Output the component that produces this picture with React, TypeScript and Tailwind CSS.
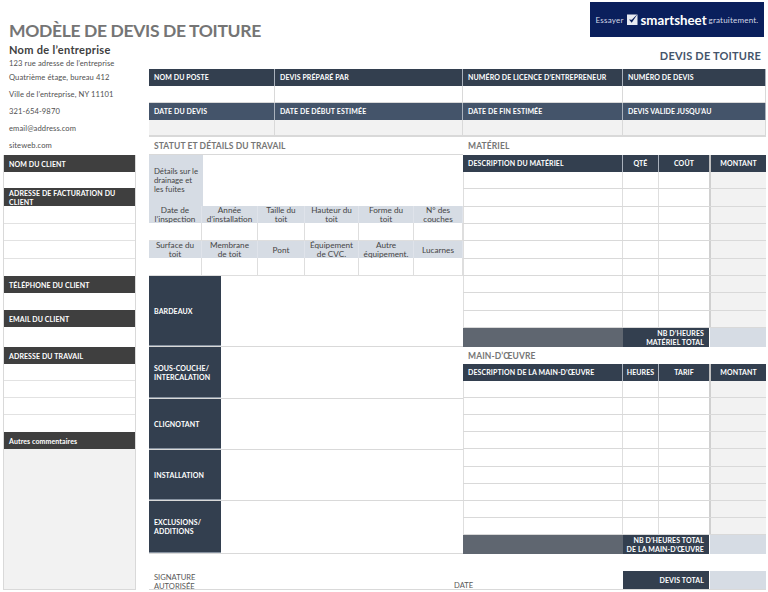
const font = { fontFamily: '"Lato", "Open Sans", sans-serif' };

function Bar({ children, h }: { children: React.ReactNode; h: string }) {
  return (
    <div className={`${h} bg-[#3f3f3f] text-white font-bold text-[7px] leading-[9px] tracking-[0.1px] pl-[5px] pt-[1px] flex items-center`}>
      <span>{children}</span>
    </div>
  );
}

function Blank({ h }: { h: string }) {
  return <div className={`${h} bg-white border-b border-[#e2e2e2]`} />;
}

function Head({ children, light }: { children: React.ReactNode; light?: boolean }) {
  return (
    <div className={`h-[17px] ${light ? "bg-[#44546a]" : "bg-[#333f4f]"} border-r border-[#aab2bd] text-white font-bold text-[7px] tracking-[0.1px] pl-[5px] flex items-center whitespace-nowrap`}>
      {children}
    </div>
  );
}

function Label({ children }: { children: React.ReactNode }) {
  return (
    <div className="h-[17px] bg-[#d6dce4] border-r border-[#dfe3ea] text-[#454545] text-[8.2px] leading-[9px] pt-[1px] text-center flex items-center justify-center whitespace-nowrap">
      <span>{children}</span>
    </div>
  );
}

function WorkRow({ label, h }: { label: React.ReactNode; h: string }) {
  return (
    <div className={`${h} flex border-b border-[#d9d9d9]`}>
      <div className="w-[72px] bg-[#333f4f] text-white font-bold text-[7px] leading-[9px] tracking-[0.1px] pl-[5px] pt-[1px] flex items-center border-b border-[#8792a0]">
        <span>{label}</span>
      </div>
      <div className="flex-1 bg-white" />
    </div>
  );
}

function LineTable({
  first,
  second,
  third,
  rowsH,
  total,
}: {
  first: string;
  second: string;
  third: string;
  rowsH: string;
  total: React.ReactNode;
}) {
  const rows = Array.from({ length: 9 });
  const cols = "grid grid-cols-[160px_36px_50px_57px]";
  return (
    <div>
      <div className={`${cols} h-[17px] bg-[#333f4f] text-white font-bold text-[7px] tracking-[0.1px]`}>
        <div className="pl-[5px] flex items-center border-r border-[#aab2bd] whitespace-nowrap">{first}</div>
        <div className="flex items-center justify-center border-r border-[#aab2bd]">{second}</div>
        <div className="flex items-center justify-center">{third}</div>
        <div className="flex items-center justify-center border-l-2 border-[#bfbfbf]">MONTANT</div>
      </div>
      <div className={`${rowsH} grid grid-rows-9`}>
        {rows.map((_, i) => (
          <div key={i} className={`${cols} border-b border-[#d9d9d9]`}>
            <div className="border-x border-[#dedede]" />
            <div className="border-r border-[#dedede]" />
            <div />
            <div className="bg-[#f2f2f2] border-l-2 border-[#d0d0d0]" />
          </div>
        ))}
      </div>
      <div className={`${cols} h-[19px]`}>
        <div className="bg-[#5f6670]" />
        <div className="col-span-2 bg-[#333f4f] text-white font-bold text-[7px] leading-[9px] tracking-[0.1px] text-right pr-[5px] flex items-center justify-end whitespace-nowrap">
          <span>{total}</span>
        </div>
        <div className="bg-[#d6dce4] border-l border-white" />
      </div>
    </div>
  );
}

function SectionTitle({ children, h }: { children: React.ReactNode; h: string }) {
  return (
    <div className={`${h} pl-[5px] pt-[1px] flex items-center text-[#767676] font-bold text-[8.5px] tracking-[0.1px] whitespace-nowrap`}>
      {children}
    </div>
  );
}

export default function App() {
  return (
    <div className="w-[768px] h-[592px] bg-white overflow-hidden" style={font}>
      <div className="h-[42px] flex justify-between items-start">
        <h1 className="mt-[20px] ml-[9px] text-[17.5px] leading-[22px] font-bold text-[#757575] tracking-[-0.35px] whitespace-nowrap">
          MODÈLE DE DEVIS DE TOITURE
        </h1>
        <div className="mt-[2px] mr-[4px] w-[174px] h-[35px] bg-[#0a1f5c] text-[#d5d9e6] flex items-center justify-center whitespace-nowrap">
          <span className="text-[8px] tracking-[0.2px]">Essayer</span>
          <svg width="13" height="13" viewBox="0 0 13 13" className="mx-[2px]">
            <rect x="1" y="1.5" width="10.5" height="10.5" fill="#e8ebf2" />
            <path d="M3 6.5 L5.7 9.8 L11.8 0.8 L5.8 6.8 Z" fill="#0a1f5c" />
          </svg>
          <span className="text-[13.3px] leading-[14px] font-bold text-white">smartsheet</span>
          <span className="ml-[2px] text-[8px] tracking-[0.2px]">gratuitement.</span>
        </div>
      </div>

      <div className="flex items-start pl-[3px]">
        <div className="w-[133px] mr-[13px]">
          <div className="h-[16px] pl-[6px] pt-[1px] flex items-center text-[11px] font-bold text-[#404040] tracking-[0.3px] whitespace-nowrap">
            Nom de l’entreprise
          </div>
          <div className="pl-[6px] text-[7.6px] text-[#505050] tracking-[0.1px]">
            <div className="h-[11px] flex items-center">123 rue adresse de l’entreprise</div>
            <div className="h-[17px] flex items-center">Quatrième étage, bureau 412</div>
            <div className="h-[17px] flex items-center">Ville de l’entreprise, NY 11101</div>
            <div className="h-[17px] flex items-center">321-654-9870</div>
            <div className="h-[17px] flex items-center">email@address.com</div>
            <div className="h-[18px] flex items-center">siteweb.com</div>
          </div>
          <div className="border-x border-[#d9d9d9]">
            <Bar h="h-[17px]">NOM DU CLIENT</Bar>
            <div className="h-[16px] bg-white" />
            <Bar h="h-[18px]">
              ADRESSE DE FACTURATION DU
              <br />
              CLIENT
            </Bar>
            <Blank h="h-[18px]" />
            <Blank h="h-[17px]" />
            <Blank h="h-[18px]" />
            <div className="h-[17px] bg-white" />
            <Bar h="h-[17px]">TÉLÉPHONE DU CLIENT</Bar>
            <div className="h-[17px] bg-white" />
            <Bar h="h-[17px]">EMAIL DU CLIENT</Bar>
            <div className="h-[20px] bg-white" />
            <Bar h="h-[17px]">ADRESSE DU TRAVAIL</Bar>
            <Blank h="h-[17px]" />
            <Blank h="h-[17px]" />
            <Blank h="h-[17px]" />
            <div className="h-[17px] bg-white" />
            <Bar h="h-[17px]">Autres commentaires</Bar>
            <div className="h-[141px] bg-[#f2f2f2] border-b border-[#d9d9d9]" />
          </div>
        </div>

        <div className="w-[617px]">
          <div className="h-[27px] pt-[1px] flex items-center justify-end pr-[5px] text-[11px] font-bold text-[#44546a] tracking-[0.2px]">
            DEVIS DE TOITURE
          </div>
          <div className="grid grid-cols-[126px_188px_160px_143px]">
            <Head>NOM DU POSTE</Head>
            <Head>DEVIS PRÉPARÉ PAR</Head>
            <Head>NUMÉRO DE LICENCE D’ENTREPRENEUR</Head>
            <Head>NUMÉRO DE DEVIS</Head>
            {[0, 1, 2, 3].map((i) => (
              <div key={i} className="h-[17px] bg-white border-r border-b border-[#d9d9d9]" />
            ))}
            <Head light>DATE DU DEVIS</Head>
            <Head light>DATE DE DÉBUT ESTIMÉE</Head>
            <Head light>DATE DE FIN ESTIMÉE</Head>
            <Head light>DEVIS VALIDE JUSQU’AU</Head>
            {[0, 1, 2, 3].map((i) => (
              <div key={i} className="h-[17px] bg-[#f2f2f2] border-r border-b-2 border-[#d9d9d9]" />
            ))}
          </div>

          <div className="flex items-start">
            <div className="w-[314px]">
              <SectionTitle h="h-[18px] border-b border-[#d9d9d9]">STATUT ET DÉTAILS DU TRAVAIL</SectionTitle>
              <div className="h-[51px] flex">
                <div className="w-[54px] bg-[#d6dce4] text-[#454545] text-[7.8px] leading-[9px] pl-[5px] flex items-center">
                  <span>
                    Détails sur le
                    <br />
                    drainage et
                    <br />
                    les fuites
                  </span>
                </div>
                <div className="flex-1 bg-white" />
              </div>
              <div className="grid grid-cols-[53px_56px_47px_54px_55px_49px]">
                <Label>Date de<br />l’inspection</Label>
                <Label>Année<br />d’installation</Label>
                <Label>Taille du<br />toit</Label>
                <Label>Hauteur du<br />toit</Label>
                <Label>Forme du<br />toit</Label>
                <Label>N° des<br />couches</Label>
                {[0, 1, 2, 3, 4, 5].map((i) => (
                  <div key={i} className="h-[18px] bg-white border-r border-b border-[#dedede]" />
                ))}
                <Label>Surface du<br />toit</Label>
                <Label>Membrane<br />de toit</Label>
                <Label>Pont</Label>
                <Label>Équipement<br />de CVC.</Label>
                <Label>Autre<br />équipement.</Label>
                <Label>Lucarnes</Label>
                {[0, 1, 2, 3, 4, 5].map((i) => (
                  <div key={i} className="h-[18px] bg-white border-r border-b border-[#dedede]" />
                ))}
              </div>
              <WorkRow h="h-[71px]" label="BARDEAUX" />
              <WorkRow h="h-[52px]" label={<>SOUS-COUCHE/<br />INTERCALATION</>} />
              <WorkRow h="h-[51px]" label="CLIGNOTANT" />
              <WorkRow h="h-[51px]" label="INSTALLATION" />
              <WorkRow h="h-[53px]" label={<>EXCLUSIONS/<br />ADDITIONS</>} />
            </div>

            <div className="w-[303px]">
              <SectionTitle h="h-[18px]">MATÉRIEL</SectionTitle>
              <LineTable
                first="DESCRIPTION DU MATÉRIEL"
                second="QTÉ"
                third="COÛT"
                rowsH="h-[156px]"
                total={<>NB D’HEURES<br />MATÉRIEL TOTAL</>}
              />
              <SectionTitle h="h-[17px]">MAIN-D’ŒUVRE</SectionTitle>
              <LineTable
                first="DESCRIPTION DE LA MAIN-D’ŒUVRE"
                second="HEURES"
                third="TARIF"
                rowsH="h-[154px]"
                total={<>NB D’HEURES TOTAL<br />DE LA MAIN-D’ŒUVRE</>}
              />
            </div>
          </div>

          <div className="h-[36px] flex items-end border-b border-[#d9d9d9] text-[7.6px] text-[#595959]">
            <div className="w-[305px] pl-[5px] leading-[9px] -mb-[2px]">
              SIGNATURE
              <br />
              AUTORISÉE
            </div>
            <div className="w-[169px] leading-[9px] -mb-[1px]">DATE</div>
            <div className="w-[143px] h-[18px] flex">
              <div className="w-[86px] bg-[#333f4f] text-white font-bold text-[7px] tracking-[0.1px] pr-[5px] flex items-center justify-end">
                DEVIS TOTAL
              </div>
              <div className="flex-1 bg-[#d6dce4] border-l border-white" />
            </div>
          </div>
        </div>
      </div>
    </div>
  );
}
